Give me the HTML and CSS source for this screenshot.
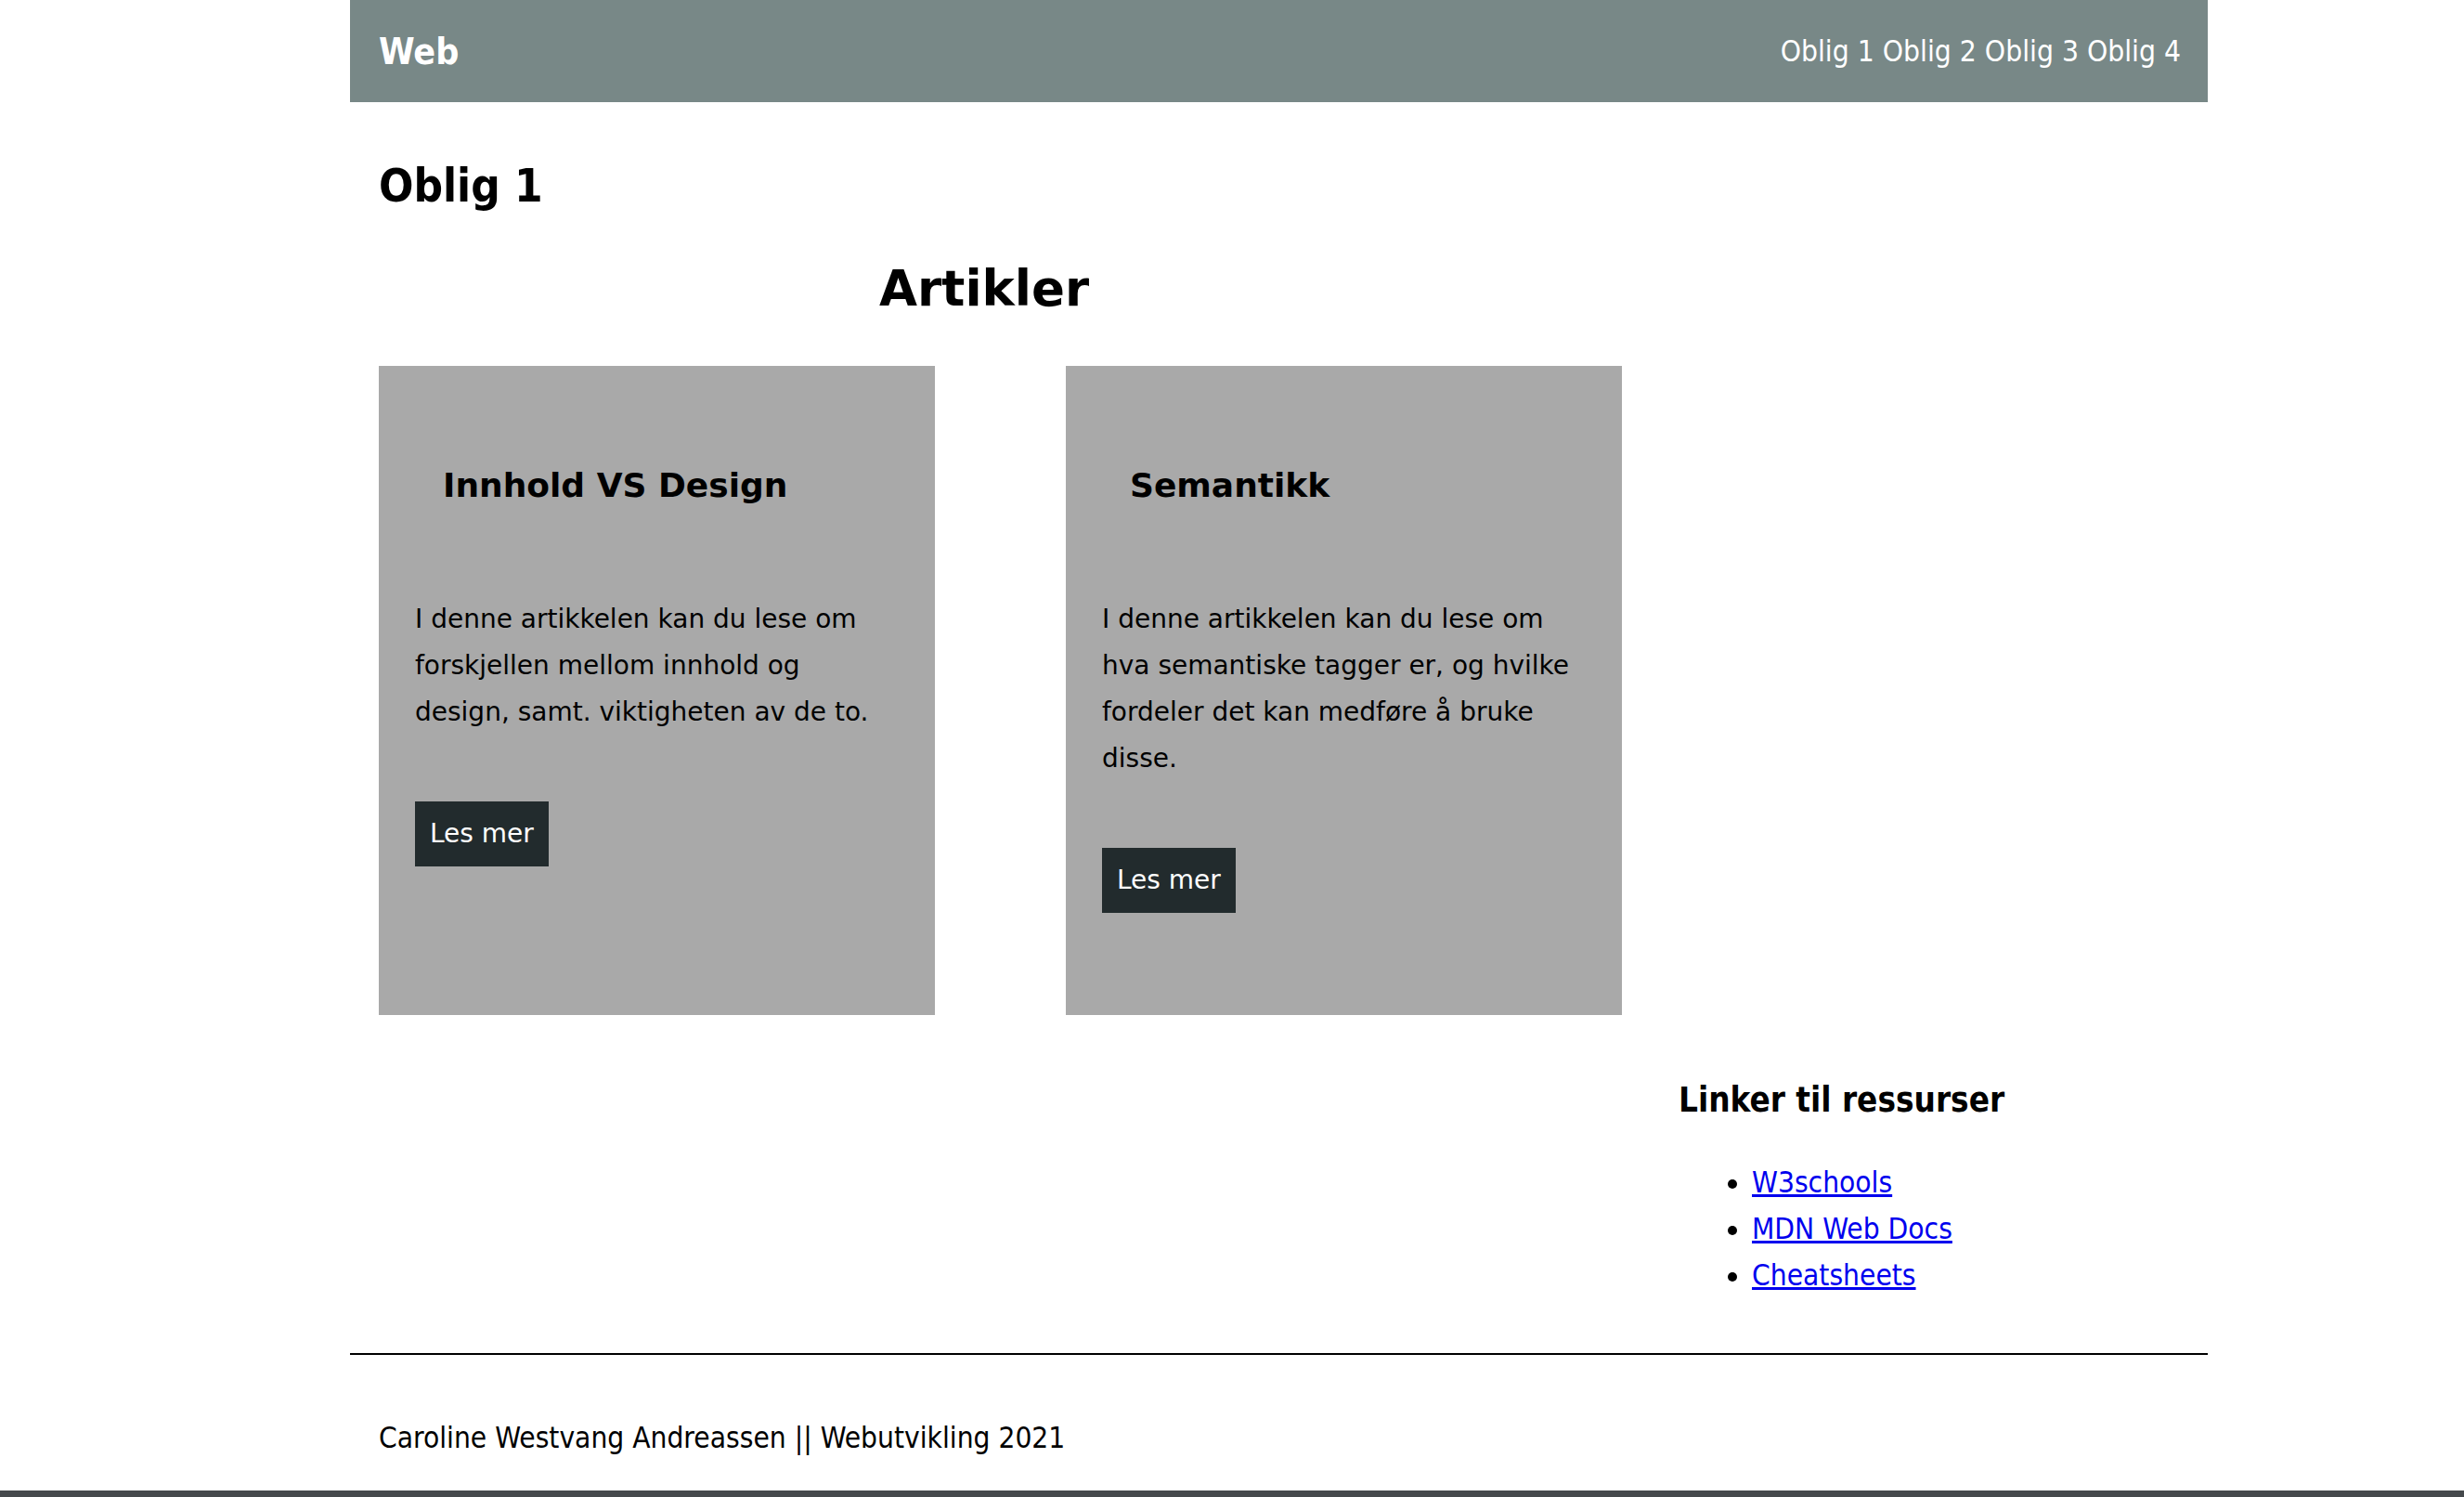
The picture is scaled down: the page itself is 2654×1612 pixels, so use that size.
FILE: index.html
```html
<!DOCTYPE html>
<html lang="no">
<head>
<meta charset="utf-8">
<title>Oblig 1</title>
<link rel="stylesheet" href="styles.css">
</head>
<body>
<div class="page">
  <header class="site-header">
    <div class="logo">Web</div>
    <nav class="nav">
      <a href="#">Oblig 1</a> <a href="#">Oblig 2</a> <a href="#">Oblig 3</a> <a href="#">Oblig 4</a>
    </nav>
  </header>

  <main class="content">
    <h1 class="page-title">Oblig 1</h1>
    <div class="layout">
      <section class="articles">
        <h1 class="articles-title">Artikler</h1>
        <div class="cards">
          <article class="card">
            <h2 class="card-title">Innhold VS Design</h2>
            <p class="card-text">I denne artikkelen kan du lese om forskjellen mellom innhold og design, samt. viktigheten av de to.</p>
            <a class="btn" href="#">Les mer</a>
          </article>
          <article class="card">
            <h2 class="card-title">Semantikk</h2>
            <p class="card-text">I denne artikkelen kan du lese om hva semantiske tagger er, og hvilke fordeler det kan medføre å bruke disse.</p>
            <a class="btn" href="#">Les mer</a>
          </article>
        </div>
      </section>
      <aside class="resources">
        <h3 class="resources-title">Linker til ressurser</h3>
        <ul class="resources-list">
          <li><a href="#">W3schools</a></li>
          <li><a href="#">MDN Web Docs</a></li>
          <li><a href="#">Cheatsheets</a></li>
        </ul>
      </aside>
    </div>
  </main>

  <footer class="site-footer">
    <p>Caroline Westvang Andreassen || Webutvikling 2021</p>
  </footer>
</div>
<div class="bottom-bar"></div>
</body>
</html>
```

FILE: styles.css
```css
html, body {
  margin: 0;
  padding: 0;
  background: #ffffff;
}

body {
  font-family: "DejaVu Sans Condensed", "DejaVu Sans", sans-serif;
  font-size: 31.4px;
  color: #000;
  min-height: 100vh;
  display: flex;
  flex-direction: column;
}

.page {
  width: 2001px;
  margin-left: 377px;
}

.site-header {
  height: 110px;
  background: #788887;
  display: flex;
  align-items: center;
  justify-content: space-between;
  padding: 0 29px 0 31px;
  box-sizing: border-box;
}

.logo {
  color: #fff;
  font-weight: bold;
  font-size: 39px;
}

.nav {
  font-size: 31.5px;
}

.nav a {
  color: #fff;
  text-decoration: none;
}

.content {
  padding: 0 31px;
}

.page-title {
  margin: 62px 0 0;
  font-size: 49px;
  font-weight: bold;
  line-height: 57px;
}

.layout {
  display: grid;
  grid-template-columns: 1400px 1fr;
}

.articles {
  grid-column: 1;
  grid-row: 1;
}

.articles-title {
  font-family: "DejaVu Sans", sans-serif;
  width: 1304px;
  text-align: center;
  font-size: 53px;
  line-height: 62px;
  margin: 51px 0 52px;
}

.cards {
  display: flex;
  gap: 141px;
  align-items: stretch;
}

.card {
  width: 599px;
  box-sizing: border-box;
  background: #a9a9a9;
  padding: 108px 39px 110px;
  font-family: "DejaVu Sans", sans-serif;
  display: flex;
  flex-direction: column;
  align-items: flex-start;
}

.card-title {
  margin: 0 0 98px 30px;
  font-size: 36px;
  line-height: 42px;
  font-weight: bold;
}

.card-text {
  margin: 0 0 71px;
  font-size: 28px;
  line-height: 50px;
}

.btn {
  display: block;
  background: #222b2d;
  color: #fff;
  text-decoration: none;
  font-size: 28px;
  line-height: 34px;
  padding: 18px 16px;
}

.resources {
  grid-column: 2;
  grid-row: 2;
}

.resources-title {
  margin: 71px 0 0;
  font-size: 36.5px;
  line-height: 42px;
  font-weight: bold;
}

.resources-list {
  margin: 42px 0 0;
  padding-left: 79px;
  line-height: 50px;
}

.resources-list a {
  color: #0000ee;
}

.site-footer {
  border-top: 2px solid #000;
  margin-top: 59px;
  padding: 71px 31px 30px;
}

.site-footer p {
  margin: 0;
  line-height: 36px;
}

.bottom-bar {
  margin-top: auto;
  height: 7px;
  background: #45494c;
}
```
